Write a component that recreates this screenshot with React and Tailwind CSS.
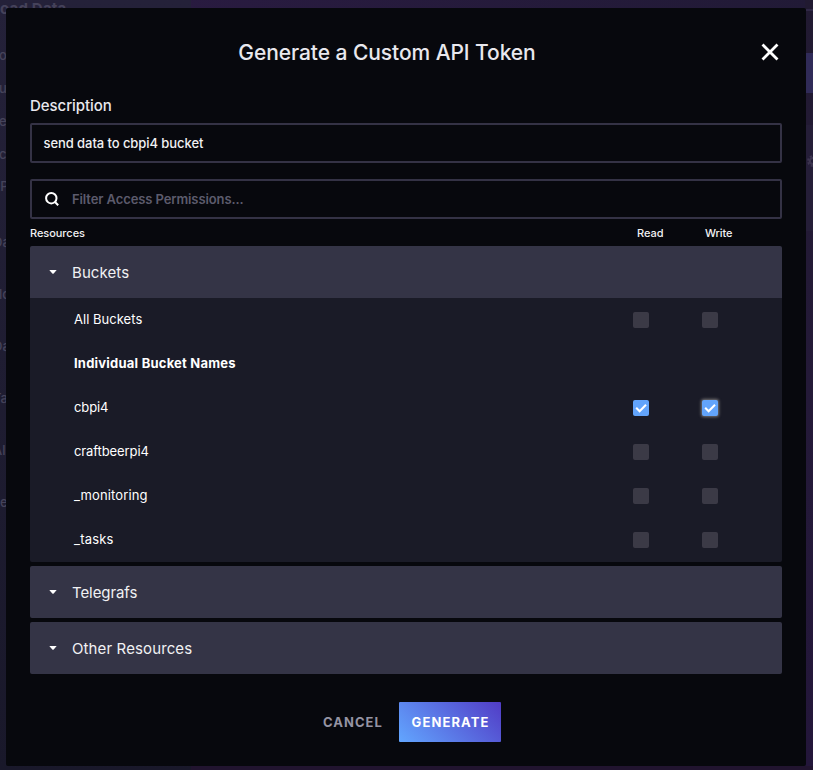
import React from "react";

const rows = [
  { name: "All Buckets", read: false, write: false, track: "tracking-[0.03px]" },
  { name: "Individual Bucket Names", heading: true, track: "tracking-[0.22px]" },
  { name: "cbpi4", read: true, write: true, focus: true, track: "tracking-[-0.1px]" },
  { name: "craftbeerpi4", read: false, write: false, track: "tracking-[-0.1px]" },
  { name: "_monitoring", read: false, write: false, track: "tracking-[0.13px]" },
  { name: "_tasks", read: false, write: false, track: "tracking-[0.2px]" },
];

function Checkbox({ checked, focus }) {
  return (
    <span
      className={
        "flex size-4 items-center justify-center rounded-[2px] " +
        (checked ? "bg-[#62a4fb] " : "bg-[#3b3a46] ") +
        (focus ? "shadow-[0_0_3px_1px_rgba(210,205,195,0.5)]" : "")
      }
    >
      {checked && (
        <svg width="16" height="16" viewBox="0 0 16 16" fill="none" stroke="#fff" strokeWidth="2">
          <path d="M3.2 7.8 6.6 11.3 13 4.7" />
        </svg>
      )}
    </span>
  );
}

function Header({ label, open, track }) {
  return (
    <div className={"flex h-[52px] items-center bg-[#343446] pl-[19px] " + (open ? "rounded-t-[2px]" : "rounded-[2px]")}>
      <svg width="8" height="4" viewBox="0 0 8 4">
        <path d="M0.3 0H7.7L4.7 3.5Q4 4.2 3.3 3.5Z" fill="#fff" />
      </svg>
      <span className={"ml-[15px] pt-[2px] text-[15px] leading-5 text-[#f1f1f3] " + track}>{label}</span>
    </div>
  );
}

const sideLabels = [
  ["o", "top-[45px] left-[-1px]"],
  ["u", "top-[78px] left-[-1px]"],
  ["e", "top-[111px] left-[-1px]"],
  ["c", "top-[144px] left-[-1px]"],
  ["AP", "top-[176px] left-[-9px]"],
  ["Da", "top-[232px] left-[-7px]"],
  ["lo", "top-[284px] left-[-1px]"],
  ["Da", "top-[336px] left-[-7px]"],
  ["Ta", "top-[388px] left-[-7px]"],
  ["Al", "top-[440px] left-[-7px]"],
  ["e", "top-[492px] left-[0px]"],
];

function Backdrop() {
  return (
    <div className="absolute inset-0 bg-linear-to-r from-[#2b1b43] to-[#211a36]">
      <div className="absolute inset-y-0 left-0 w-[191px] bg-linear-to-b from-[#242139] to-[#19182a]" />
      <div className="absolute inset-y-0 right-0 w-2 bg-linear-to-b from-[#211a31] via-[#241a38] to-[#23163a]" />
      <div className="absolute bottom-0 right-0 h-1 w-[622px] bg-[#21142f]" />
      <div className="absolute left-0 top-[-1px] text-[15px] font-bold leading-5 tracking-[0.2px] text-[#45425a]">oad Data</div>
      <div className="absolute right-0 top-[9px] h-[2px] w-[7px] bg-[#302846]" />
      <div className="absolute right-0 top-[53px] h-10 w-[7px] bg-[#302b58]" />
      <div className="absolute right-0 top-[125px] h-[106px] w-[7px] bg-[#251e38]" />
      <svg className="absolute right-[-6px] top-[155px]" width="12" height="12" viewBox="0 0 12 12" fill="none">
        <circle cx="6" cy="6" r="3.2" stroke="#3d3550" strokeWidth="2.2" />
        <circle cx="6" cy="6" r="5" stroke="#3d3550" strokeWidth="1.8" strokeDasharray="2.2 1.73" />
      </svg>
      {sideLabels.map(([t, pos], i) => (
        <div key={i} className={"absolute text-[13px] font-medium leading-5 text-[#45435a] " + pos}>
          {t}
        </div>
      ))}
    </div>
  );
}

export default function App() {
  return (
    <div className="relative h-[770px] w-[813px] overflow-hidden font-['Inter','Liberation_Sans',sans-serif]">
      <Backdrop />
      <div className="relative ml-[6px] mt-2 flex h-[758px] w-[800px] flex-col rounded-[2px] bg-[#07080d] px-6">
        <div className="flex h-[87px] shrink-0 justify-center">
          <h1 className="mt-[31px] h-7 whitespace-nowrap pr-[38px] text-[21px] font-medium leading-7 tracking-[-0.07px] text-[#e9e8ee]">
            Generate a Custom API Token
          </h1>
          <svg className="absolute right-[27px] top-[35px]" width="18" height="18" viewBox="0 0 18 18" fill="none" stroke="#fff" strokeWidth="2.8" strokeLinecap="square">
            <path d="M2.5 2.5 15.5 15.5M15.5 2.5 2.5 15.5" />
          </svg>
        </div>

        <label className="h-7 w-fit pt-[1px] text-[15px] font-medium leading-5 tracking-[-0.06px] text-[#e9e8ee]">Description</label>
        <div className="flex h-10 items-center rounded-[2px] border-2 border-[#343245] px-[11.5px] pt-[2px] text-[13px] font-medium tracking-[-0.07px] text-[#f1f1f3]">
          <span>send data to cbpi4 bucket</span>
        </div>
        <div className="mt-4 flex h-10 items-center rounded-[2px] border-2 border-[#343245] pl-[13px] text-[13px] font-semibold text-[#5c5b6c]">
          <svg width="14" height="14" viewBox="0 0 14 14" fill="none" stroke="#fff" strokeWidth="2">
            <circle cx="6.3" cy="6.2" r="5.2" />
            <path d="M10 10 13.2 13.3" />
          </svg>
          <span className="ml-[13px] pt-[2px] tracking-[-0.1px]">Filter Access Permissions...</span>
        </div>

        <div className="flex h-[27px] shrink-0 items-center pt-[1px] text-[11px] font-medium leading-4 text-[#f1f1f3]">
          <span className="w-[607px] tracking-[-0.05px]">Resources</span>
          <span className="w-[68px]">Read</span>
          <span className="tracking-[-0.1px]">Write</span>
        </div>

        <div className="flex flex-col gap-1">
          <section>
            <Header label="Buckets" open track="tracking-[0.08px]" />
            <div className="rounded-b-[2px] bg-[#1a1b27]">
              {rows.map((r) => (
                <div key={r.name} className="flex h-11 items-center pl-11">
                  <span
                    className={
                      "w-[559px] pb-[2px] text-[13px] leading-5 text-white " +
                      (r.heading ? "font-bold " : "font-normal ") +
                      r.track
                    }
                  >
                    {r.name}
                  </span>
                  {!r.heading && (
                    <div className="flex gap-[53px]">
                      <Checkbox checked={r.read} />
                      <Checkbox checked={r.write} focus={r.focus} />
                    </div>
                  )}
                </div>
              ))}
            </div>
          </section>
          <Header label="Telegrafs" track="tracking-[-0.08px]" />
          <Header label="Other Resources" track="tracking-[0.12px]" />
        </div>

        <div className="mt-7 flex h-10 items-center pl-[293px] text-[13px] font-bold">
          <button className="w-[76px] pt-px text-left tracking-[1px] text-[#9594a3]">CANCEL</button>
          <button className="h-10 w-[102px] rounded-[1px] bg-linear-[45deg,#62a6ff,#513cc6] pl-px pt-px tracking-[1.1px] text-white">
            GENERATE
          </button>
        </div>
      </div>
    </div>
  );
}
